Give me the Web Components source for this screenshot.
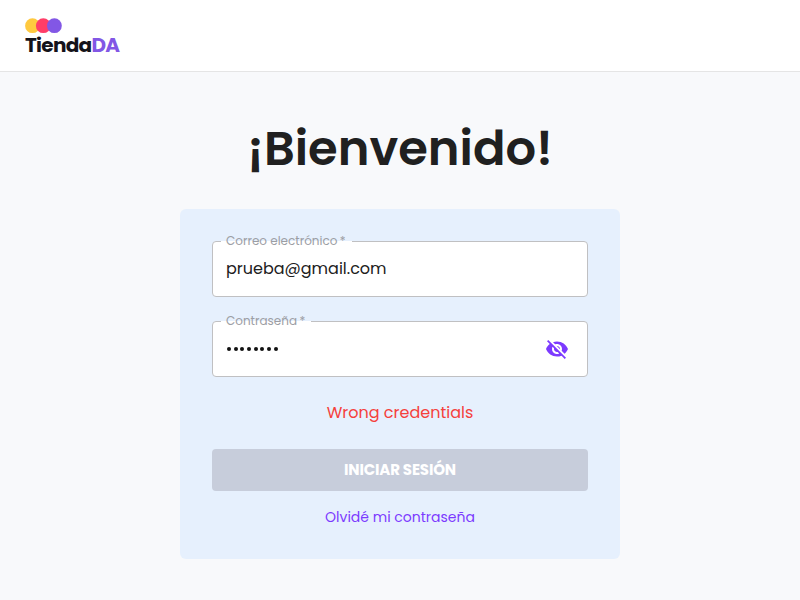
<!DOCTYPE html>
<html lang="es">
<head>
<meta charset="utf-8">
<title>TiendaDA</title>
<style>
html, body { margin: 0; height: 100%; }
body { background: #f8f9fb; color: #202020; font-family: Poppins, Inter, "Open Sans", sans-serif; overflow: hidden; }
</style>
</head>
<body>
<login-page></login-page>
<script>
const define = (name, html, setup) => customElements.define(name, class extends HTMLElement {
  constructor() {
    super();
    this.attachShadow({ mode: "open" }).innerHTML = html;
  }
  connectedCallback() { if (setup) setup(this, this.shadowRoot); }
});

define("brand-logo", `
<style>
:host { display: flex; flex-direction: column; width: 96px; }
svg { display: block; width: 38px; height: 16px; }
.name { font: 700 20px/22px Poppins, Inter, sans-serif; letter-spacing: -0.72px; color: #14131a; white-space: nowrap; }
.name b { font-weight: 700; color: #8257e5; }
</style>
<svg viewBox="0 0 38 16"><circle cx="7.5" cy="7.7" r="7.4" fill="#ffc93f"/><circle cx="18.3" cy="7.7" r="7.4" fill="#ff3d68"/><circle cx="29.4" cy="7.7" r="7.4" fill="#8257e5"/></svg>
<span class="name">Tienda<b>DA</b></span>`);

define("top-bar", `
<style>
:host { display: flex; box-sizing: border-box; height: 72px; padding: 18px 0 0 25px; background: #fff; border-bottom: 1px solid #e5e5e5; }
</style>
<slot></slot>`);

define("eye-off", `
<style>:host { display: block; width: 24px; height: 24px; color: #7c3aff; } svg { display: block; }</style>
<svg width="24" height="24" viewBox="0 0 24 24" fill="currentColor"><path d="M12 7c2.76 0 5 2.24 5 5 0 .65-.13 1.26-.36 1.83l2.92 2.92c1.51-1.26 2.7-2.89 3.43-4.75-1.73-4.39-6-7.5-11-7.5-1.4 0-2.74.25-3.98.7l2.16 2.16C10.74 7.13 11.35 7 12 7zM2 4.27l2.28 2.28.46.46C3.08 8.3 1.78 10.02 1 12c1.73 4.39 6 7.5 11 7.5 1.55 0 3.03-.3 4.38-.84l.42.42L19.73 22 21 20.73 3.27 3 2 4.27zM7.53 9.8l1.55 1.55c-.05.21-.08.43-.08.65 0 1.66 1.34 3 3 3 .22 0 .44-.03.65-.08l1.55 1.55c-.67.33-1.41.53-2.2.53-2.76 0-5-2.24-5-5 0-.79.2-1.53.53-2.2zm4.31-.78l3.15 3.15.02-.16c0-1.66-1.34-3-3-3l-.17.01z"/></svg>`);

define("outlined-field", `
<style>
:host { display: block; height: 56px; position: relative; }
.box { display: flex; align-items: center; justify-content: space-between; box-sizing: border-box; height: 56px; padding: 0 18px 0 13px; border: 1px solid #c0c0c2; border-radius: 4px; background: #fff; font-size: 16px; line-height: 24px; }
.label { position: absolute; left: 9px; top: 0; width: var(--notch); height: 1px; background: #fff; }
.label span { position: absolute; left: 5px; top: -9px; font-size: 12px; line-height: 18px; color: #9c9ea4; white-space: nowrap; }
</style>
<div class="box"><slot></slot></div><div class="label"><span></span></div>`,
(el, root) => { root.querySelector(".label span").textContent = el.getAttribute("label"); });

define("password-dots", `
<style>
:host { display: flex; gap: 2.65px; padding-left: 1.2px; }
i { width: 4px; height: 4px; border-radius: 50%; background: #111; }
</style>${"<i></i>".repeat(8)}`);

define("submit-button", `
<style>
:host { display: block; }
button { display: block; width: 100%; height: 42px; margin: 0; padding: 0; border: 0; border-radius: 4px; background: #c7cddb; color: #fff; font: 700 15px/42px Poppins, Inter, sans-serif; letter-spacing: -0.15px; }
</style>
<button><slot></slot></button>`);

define("login-card", `
<style>
:host { display: flex; flex-direction: column; box-sizing: border-box; width: 440px; height: 350px; padding: 32px; border-radius: 6px; background: #e6f0fd; }
</style>
<slot></slot>`);

define("login-page", `
<style>
:host { display: flex; flex-direction: column; height: 100vh; }
main { display: flex; flex-direction: column; align-items: center; }
h1 { margin: 41px 0 24px; font-size: 48px; font-weight: 600; line-height: 72px; color: #202020; }
.mail { --notch: 131px; }
.pass { --notch: 90px; margin-top: 24px; }
.error { margin: 24px 0; text-align: center; font-size: 16px; line-height: 24px; color: #f5403c; }
.forgot { margin-top: 16px; text-align: center; font-size: 14px; line-height: 21px; color: #7c3aff; text-decoration: none; }
</style>
<top-bar><brand-logo></brand-logo></top-bar>
<main>
<h1>¡Bienvenido!</h1>
<login-card>
<outlined-field class="mail" label="Correo electrónico&#8201;*"><span>prueba@gmail.com</span></outlined-field>
<outlined-field class="pass" label="Contraseña&#8201;*"><password-dots></password-dots><eye-off></eye-off></outlined-field>
<div class="error">Wrong credentials</div>
<submit-button>INICIAR SESIÓN</submit-button>
<a class="forgot">Olvidé mi contraseña</a>
</login-card>
</main>`);
</script>
</body>
</html>
